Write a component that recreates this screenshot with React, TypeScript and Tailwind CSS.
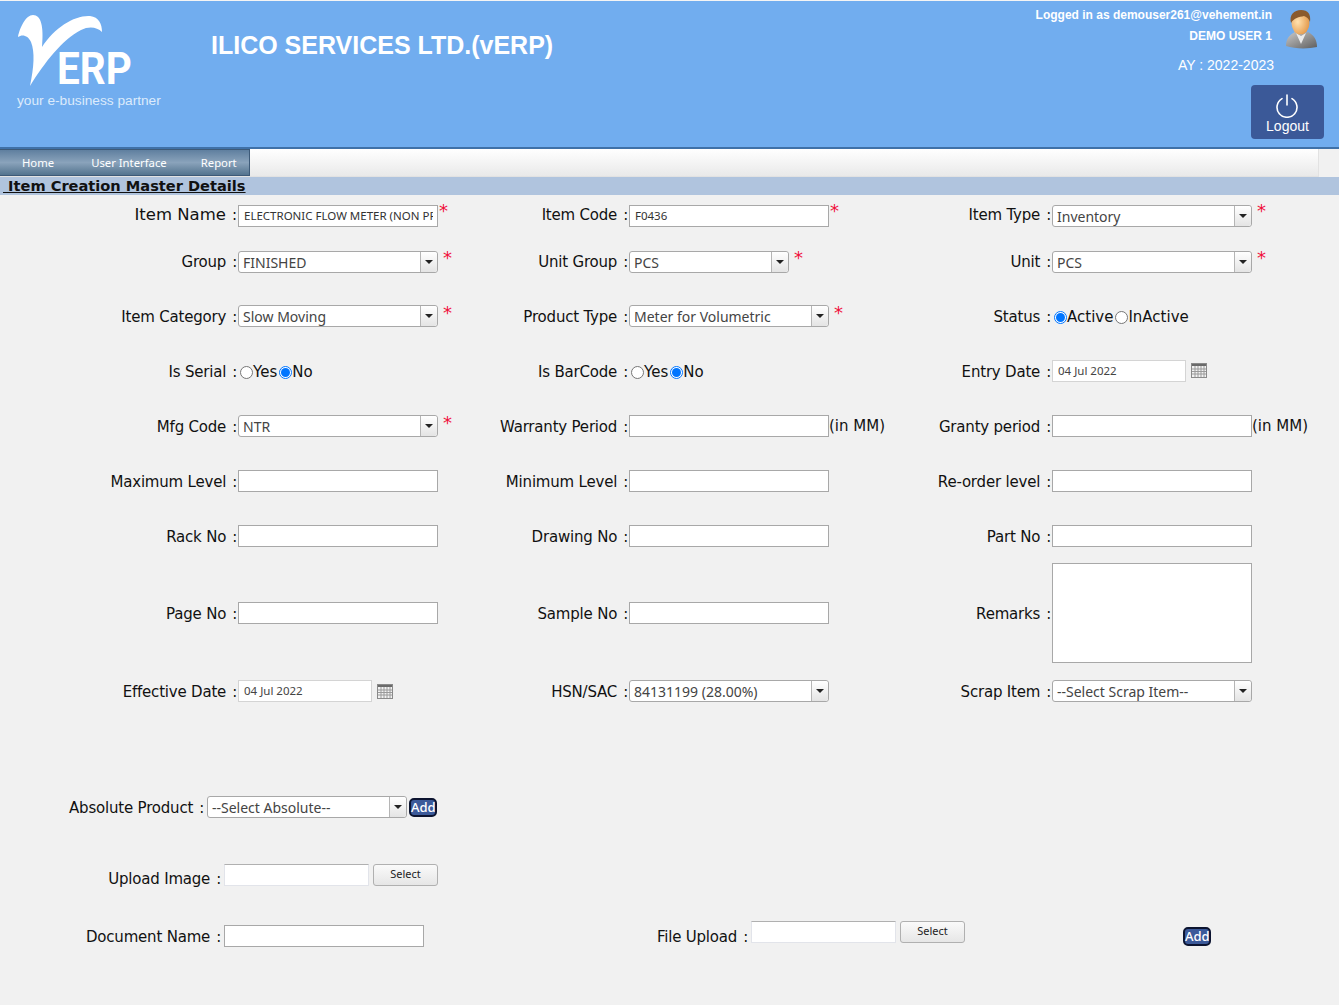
import * as React from "react";

function Label({ children, big = false, tight = false }: { children: React.ReactNode; big?: boolean; tight?: boolean }) {
  return (
    <div className={`whitespace-nowrap pr-px text-right text-[#111] ${tight ? "" : "pt-[3px]"} ${big ? "text-[16.5px]" : "text-[15px] tracking-[-0.2px]"}`}>
      {children}<span className="ml-[6px] text-[15px]">:</span>
    </div>
  );
}

function Star({ className = "" }: { className?: string }) {
  return <span className={`self-start text-[18px] leading-none text-[#f0103c] ${className}`}>*</span>;
}

function TextBox({ value = "", width = "w-[200px]" }: { value?: string; width?: string }) {
  return (
    <div className={`${width} h-[22px] shrink-0 border border-[#a8a8a8] bg-white pl-[5px] pr-[4px]`}>
      <div className="overflow-hidden whitespace-nowrap font-['Noto_Sans',sans-serif] text-[11.5px] leading-[20px] text-[#333]">{value}</div>
    </div>
  );
}

function Combo({ value, width = "w-[200px]" }: { value: string; width?: string }) {
  return (
    <div className={`${width} flex h-[22px] shrink-0 rounded-[3px] border border-[#a8a8a8] bg-white`}>
      <div className="flex-1 overflow-hidden whitespace-nowrap pl-1 font-['Noto_Sans',sans-serif] text-[14px] leading-[21px] text-[#444]">{value}</div>
      <div className="flex w-[17px] items-center justify-center rounded-r-[3px] border-l border-[#b5b5b5] bg-gradient-to-b from-white to-[#e4e4e4]">
        <div className="h-0 w-0 border-x-[4px] border-t-[4px] border-x-transparent border-t-[#222]" />
      </div>
    </div>
  );
}

function Radio({ on = false }: { on?: boolean }) {
  return (
    <span className={`inline-flex h-[13px] w-[13px] shrink-0 items-center justify-center rounded-full border bg-white ${on ? "border-[#0075ff]" : "border-[#767676]"}`}>
      {on && <span className="h-[9px] w-[9px] rounded-full bg-[#0075ff]" />}
    </span>
  );
}

function RadioPair({ a, b, first }: { a: string; b: string; first: boolean }) {
  return (
    <div className="flex items-center pl-[2px] pt-[3px] text-[15px] text-[#111]">
      <Radio on={first} />
      <span>{a}</span>
      <span className="w-[2px]" />
      <Radio on={!first} />
      <span>{b}</span>
    </div>
  );
}

function DateBox({ value }: { value: string }) {
  return (
    <div className="flex items-center">
      <div className="h-[22px] w-[134px] border border-[#d4d4d4] bg-white pl-[5px] font-['Noto_Sans',sans-serif] text-[11.5px] leading-[20px] text-[#444]">{value}</div>
      <svg className="ml-[5px]" width="16" height="15" viewBox="0 0 16 15">
        <rect x="0.5" y="0.5" width="15" height="14" fill="#f2f2f2" stroke="#8a8a8a" />
        <rect x="1" y="1" width="14" height="2" fill="#6a6a6a" />
        <path d="M1 6h14M1 8.5h14M1 11h14M4 3v11M7 3v11M10 3v11M13 3v11" stroke="#9a9a9a" strokeWidth="1" />
      </svg>
    </div>
  );
}

function Upload() {
  return (
    <div className="flex items-start">
      <div className="h-[22px] w-[145px] shrink-0 border border-[#e2e4ea] border-t-[#b0b0b0] bg-white" />
      <button className="ml-[4px] h-[22px] w-[65px] rounded-[3px] border border-[#b0b0b0] bg-gradient-to-b from-[#fafafa] to-[#e6e6e6] pb-[2px] font-['Noto_Sans',sans-serif] text-[11px] leading-[16px] text-[#222]">
        Select
      </button>
    </div>
  );
}

function AddButton() {
  return (
    <button className="h-[19px] w-[28px] rounded-[5px] border-2 border-[#0c1430] bg-[#3c5a9a] font-['Noto_Sans',sans-serif] text-[13px] font-medium leading-[14px] text-white">
      Add
    </button>
  );
}

function Row({ cells, height, big = false, tight = false }: { cells: [string, React.ReactNode][]; height: string; big?: boolean; tight?: boolean }) {
  return (
    <div className={`grid grid-cols-[238px_200px_191px_200px_223px_200px] items-center ${height}`}>
      {cells.map(([label, control], i) => (
        <React.Fragment key={label}>
          <Label big={big && i === 0} tight={tight}>{label}</Label>
          <div className="flex items-center whitespace-nowrap">{control}</div>
        </React.Fragment>
      ))}
    </div>
  );
}

export default function App() {
  return (
    <div className="h-[1005px] w-[1339px] overflow-hidden bg-[#f1f1f1] font-['DejaVu_Sans',sans-serif]">
      <header className="flex h-[149px] border-b-2 border-t border-[#3f71a8] border-t-[#f4f4f4] bg-[#71adef] text-white">
        <div className="w-[190px] shrink-0 pl-[17px] pt-[11px]">
          <div className="flex h-[76px] items-end">
            <svg width="90" height="76" viewBox="0 0 90 76" className="shrink-0">
              <path d="M1 25C3 15 9 3 16 3c8 0 11 11 9 32C38 15 58 3 73 4c9 1 12 8 12 16-5-5-13-6-21-2C45 28 28 50 13 74c4-19 5-34 1-44-3-7-9-8-13-5z" fill="#fff" />
            </svg>
            <span className="-ml-[50px] mb-[3px] origin-left whitespace-nowrap font-['Roboto',sans-serif] text-[44px] font-bold leading-[32px] text-white [transform:scaleX(0.92)]">ERP</span>
          </div>
          <div className="mt-[3px] whitespace-nowrap font-['Liberation_Sans',sans-serif] text-[13.7px] text-[#dcebfc]">your e-business partner</div>
        </div>
        <h1 className="ml-[21px] mt-[28px] font-['Liberation_Sans',sans-serif] text-[25px] font-bold leading-[32px]">ILICO SERVICES LTD.(vERP)</h1>
        <div className="ml-auto mr-[15px] flex flex-col items-end font-['Liberation_Sans',sans-serif]">
          <div className="flex">
            <div className="flex flex-col items-end pt-[4px] text-[12px] font-bold leading-[21px]">
              <div>Logged in as demouser261@vehement.in</div>
              <div>DEMO USER 1</div>
              <div className="mr-[-2px] mt-[8px] text-[14px] font-normal">AY : 2022-2023</div>
            </div>
            <svg className="ml-[14px] mr-[6px] mt-[9px]" width="32" height="40" viewBox="0 0 32 40">
              <defs>
                <linearGradient id="suit" x1="0" y1="0" x2="1" y2="1">
                  <stop offset="0" stopColor="#c9c9c9" />
                  <stop offset="1" stopColor="#5e5e5e" />
                </linearGradient>
                <radialGradient id="face" cx="0.35" cy="0.45" r="0.75">
                  <stop offset="0" stopColor="#ffe2b0" />
                  <stop offset="1" stopColor="#e08f3c" />
                </radialGradient>
              </defs>
              <path d="M0 36c0-7 3-11 9-14l6 3 7-3c6 3 9 8 9 15-9 2-22 2-31-1z" fill="url(#suit)" />
              <path d="M10 23l5 11 5-11-5 3z" fill="#eaeaea" />
              <ellipse cx="14.5" cy="13" rx="9" ry="11.5" fill="url(#face)" />
              <path d="M5 13C3 5 8 0 15 0c7 0 10 4 9 12-1-3-3-5-6-6-5 1-10 2-13 7z" fill="#8a5a2c" />
            </svg>
          </div>
          <button className="mt-[9px] flex h-[54px] w-[73px] flex-col items-center rounded-[4px] bg-[#3b5998] pt-[9px] text-[14px] leading-[17px] text-white">
            <svg width="24" height="24" viewBox="0 0 24 24" fill="none" stroke="#fff" strokeWidth="1.6" strokeLinecap="round" className="-translate-x-px">
              <path d="M7 4.6a10 10 0 1 0 10 0M12 1v10" />
            </svg>
            <span>Logout</span>
          </button>
        </div>
      </header>

      <nav className="flex h-[28px] w-[1319px] border-b border-r border-[#e2e2e2] bg-gradient-to-b from-white to-[#e9e9e9]">
        <div className="flex h-[27px] w-[250px] items-center whitespace-nowrap border border-l-0 border-[#3d5a78] bg-gradient-to-b from-[#5f7f9f] via-[#8aa3bb] to-[#54748f] pl-[22px] pt-[1px] font-['Noto_Sans',sans-serif] text-[11.3px] text-white">
          <span>Home</span>
          <span className="ml-[37px]">User Interface</span>
          <span className="ml-[34px]">Report</span>
        </div>
      </nav>

      <div className="h-[18px] bg-[#b0c4de] pl-[3px] text-[14.6px] font-bold leading-[18px] text-[#111]">
        <span className="underline">&nbsp;Item Creation Master Details</span>
      </div>

      <main>
        <Row
          big
          tight
          height="h-[41px]"
          cells={[
            ["Item Name", <><TextBox value="ELECTRONIC FLOW METER (NON PRESSURE)" /><Star className="-mt-[3px] ml-px" /></>],
            ["Item Code", <><TextBox value="F0436" /><Star className="-mt-[3px] ml-px" /></>],
            ["Item Type", <><Combo value="Inventory" /><Star className="-mt-[3px] ml-[5px]" /></>],
          ]}
        />
        <Row
          tight
          height="h-[52px]"
          cells={[
            ["Group", <><Combo value="FINISHED" /><Star className="-mt-[2px] ml-[5px]" /></>],
            ["Unit Group", <><Combo value="PCS" width="w-[160px]" /><Star className="-mt-[2px] ml-[5px]" /></>],
            ["Unit", <><Combo value="PCS" /><Star className="-mt-[2px] ml-[5px]" /></>],
          ]}
        />
        <Row
          height="h-[55px]"
          cells={[
            ["Item Category", <><Combo value="Slow Moving" /><Star className="-mt-[1px] ml-[5px]" /></>],
            ["Product Type", <><Combo value="Meter for Volumetric" /><Star className="-mt-[1px] ml-[5px]" /></>],
            ["Status", <RadioPair a="Active" b="InActive" first />],
          ]}
        />
        <Row
          height="h-[55px]"
          cells={[
            ["Is Serial", <RadioPair a="Yes" b="No" first={false} />],
            ["Is BarCode", <RadioPair a="Yes" b="No" first={false} />],
            ["Entry Date", <DateBox value="04 Jul 2022" />],
          ]}
        />
        <Row
          height="h-[55px]"
          cells={[
            ["Mfg Code", <><Combo value="NTR" /><Star className="-mt-[1px] ml-[5px]" /></>],
            ["Warranty Period", <><TextBox /><span className="pt-px text-[15px] text-[#111]">(in MM)</span></>],
            ["Granty period", <><TextBox /><span className="pt-px text-[15px] text-[#111]">(in MM)</span></>],
          ]}
        />
        <Row height="h-[55px]" cells={[["Maximum Level", <TextBox />], ["Minimum Level", <TextBox />], ["Re-order level", <TextBox />]]} />
        <Row height="h-[55px]" cells={[["Rack No", <TextBox />], ["Drawing No", <TextBox />], ["Part No", <TextBox />]]} />
        <Row
          height="h-[100px]"
          cells={[
            ["Page No", <TextBox />],
            ["Sample No", <TextBox />],
            ["Remarks", <div className="h-[100px] w-[200px] border border-[#a8a8a8] bg-white" />],
          ]}
        />
        <Row
          height="h-[56px]"
          cells={[
            ["Effective Date", <DateBox value="04 Jul 2022" />],
            ["HSN/SAC", <Combo value="84131199 (28.00%)" />],
            ["Scrap Item", <Combo value="--Select Scrap Item--" />],
          ]}
        />

        <div className="mt-[77px] flex h-[22px] items-center">
          <div className="mr-[2px] w-[205px]"><Label>Absolute Product</Label></div>
          <Combo value="--Select Absolute--" />
          <div className="ml-[2px]"><AddButton /></div>
        </div>

        <div className="mt-[46px] flex h-[22px] items-center">
          <div className="mr-[2px] mt-[5px] w-[222px]"><Label>Upload Image</Label></div>
          <Upload />
        </div>

        <div className="mt-[39px] flex h-[22px] items-center">
          <div className="mr-[2px] w-[222px]"><Label>Document Name</Label></div>
          <TextBox />
          <div className="mr-[2px] w-[325px]"><Label>File Upload</Label></div>
          <div className="-mt-[8px]"><Upload /></div>
          <div className="ml-[218px]"><AddButton /></div>
        </div>
      </main>
    </div>
  );
}
